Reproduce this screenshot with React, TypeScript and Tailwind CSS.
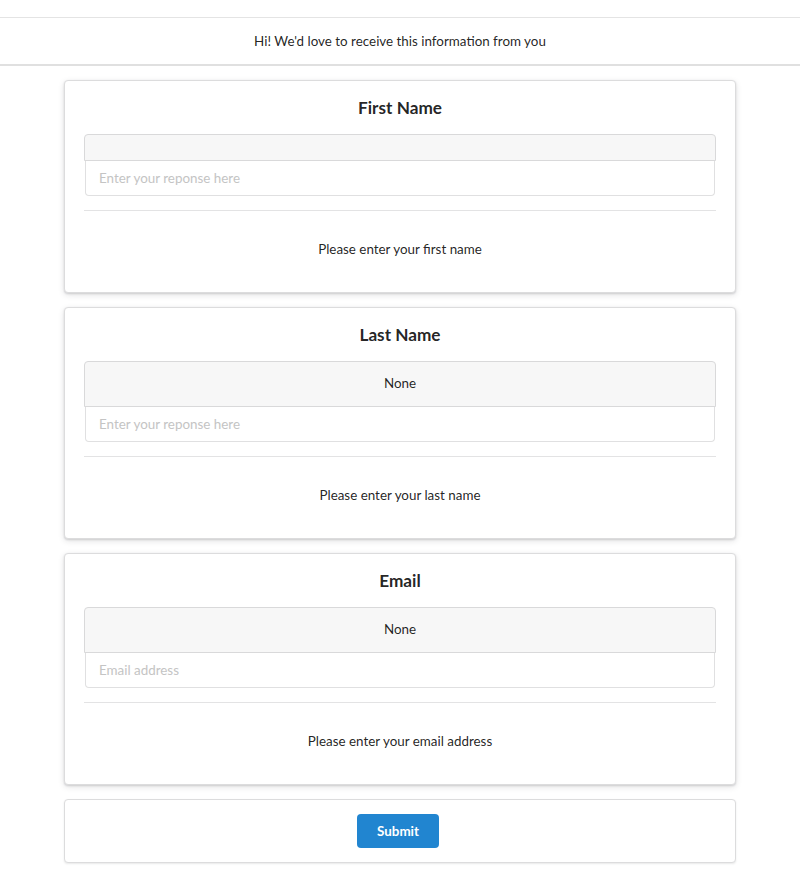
import React from "react";

function Field({ title, label, placeholder, help }: { title: string; label?: string; placeholder: string; help: string }) {
  return (
    <div className="rounded-[4px] border border-[#dcdcdd] bg-white px-[19px] pt-[15px] pb-[33px] shadow-[0_1px_2px_0_rgba(34,36,38,0.15),0_2px_6px_0_rgba(34,36,38,0.12)]">
      <h3 className="text-center text-[17.2px] font-bold leading-6 text-[rgba(0,0,0,0.87)]">{title}</h3>
      <div className="mt-[14px]">
        <div className="rounded-t-[4px] border border-[#d9d9da] bg-[#f7f7f7] pt-[12px] pb-[13px] text-center text-[13.4px] leading-[19px] text-[rgba(0,0,0,0.87)]">
          {label ? label : <span className="block h-0" />}
        </div>
        <input
          className="mx-px block h-[35px] w-[calc(100%-2px)] rounded-b-[4px] border border-t-0 border-[#e0e0e1] bg-white px-[13px] text-[13.4px] text-[rgba(0,0,0,0.87)] outline-none placeholder:text-[#c4c4c4]"
          placeholder={placeholder}
        />
      </div>
      <div className="mt-[14px] h-px bg-[#e3e3e4]" />
      <p className="mt-[28px] text-center text-[13.4px] leading-5 text-[rgba(0,0,0,0.87)]">{help}</p>
    </div>
  );
}

export default function App() {
  return (
    <div className="min-h-[894px] bg-white pt-[17px] font-['Lato','Liberation_Sans',sans-serif]">
      <div className="flex h-[49px] items-center justify-center border-t border-b-2 border-t-[#e4e4e4] border-b-[#e0e0e0] text-[13.4px] text-[rgba(0,0,0,0.87)]">
        Hi! We'd love to receive this information from you
      </div>
      <div className="mx-auto mt-[14px] flex w-[672px] flex-col gap-[14px]">
        <Field title="First Name" placeholder="Enter your reponse here" help="Please enter your first name" />
        <Field title="Last Name" label="None" placeholder="Enter your reponse here" help="Please enter your last name" />
        <Field title="Email" label="None" placeholder="Email address" help="Please enter your email address" />
        <div className="flex justify-center rounded-[4px] border border-[#dcdcdd] bg-white py-[14px] shadow-[0_1px_2px_0_rgba(34,36,38,0.1)]">
          <button className="mr-[4px] h-[34px] w-[82px] rounded-[4px] bg-[#2185d0] text-[13.4px] font-bold text-white">Submit</button>
        </div>
      </div>
    </div>
  );
}
